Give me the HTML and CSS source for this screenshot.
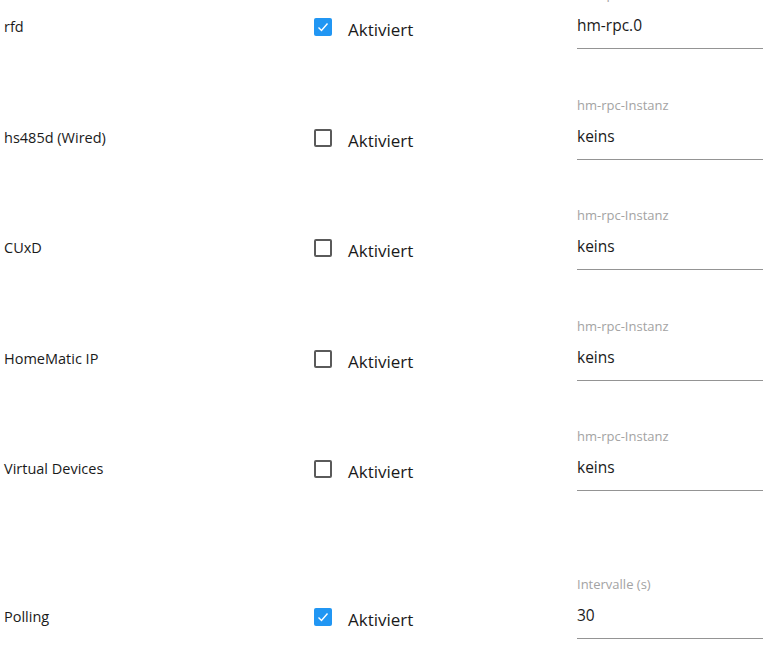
FILE: index.html
```html
<!DOCTYPE html>
<html lang="de">
<head>
<meta charset="utf-8">
<title>Einstellungen</title>
<link rel="stylesheet" href="styles.css">
</head>
<body>
<div class="page">
  <div class="row">
    <div class="name">rfd</div>
    <div class="check-cell">
      <span class="box checked"><svg viewBox="0 0 18 18" width="18" height="18"><rect x="0" y="0" width="18" height="18" rx="2" fill="#2196f3"/><polyline points="4.5,9.5 7.5,12.5 13.5,5.5" fill="none" stroke="#fff" stroke-width="1.4"/></svg></span>
      <span class="check-label">Aktiviert</span>
    </div>
    <div class="field">
      <div class="field-label">hm-rpc-Instanz</div>
      <div class="field-value">hm-rpc.0</div>
    </div>
  </div>
  <div class="row">
    <div class="name">hs485d (Wired)</div>
    <div class="check-cell">
      <span class="box"></span>
      <span class="check-label">Aktiviert</span>
    </div>
    <div class="field">
      <div class="field-label">hm-rpc-Instanz</div>
      <div class="field-value">keins</div>
    </div>
  </div>
  <div class="row">
    <div class="name">CUxD</div>
    <div class="check-cell">
      <span class="box"></span>
      <span class="check-label">Aktiviert</span>
    </div>
    <div class="field">
      <div class="field-label">hm-rpc-Instanz</div>
      <div class="field-value">keins</div>
    </div>
  </div>
  <div class="row">
    <div class="name">HomeMatic IP</div>
    <div class="check-cell">
      <span class="box"></span>
      <span class="check-label">Aktiviert</span>
    </div>
    <div class="field">
      <div class="field-label">hm-rpc-Instanz</div>
      <div class="field-value">keins</div>
    </div>
  </div>
  <div class="row">
    <div class="name">Virtual Devices</div>
    <div class="check-cell">
      <span class="box"></span>
      <span class="check-label">Aktiviert</span>
    </div>
    <div class="field">
      <div class="field-label">hm-rpc-Instanz</div>
      <div class="field-value">keins</div>
    </div>
  </div>
  <div class="row polling">
    <div class="name">Polling</div>
    <div class="check-cell">
      <span class="box checked"><svg viewBox="0 0 18 18" width="18" height="18"><rect x="0" y="0" width="18" height="18" rx="2" fill="#2196f3"/><polyline points="4.5,9.5 7.5,12.5 13.5,5.5" fill="none" stroke="#fff" stroke-width="1.4"/></svg></span>
      <span class="check-label">Aktiviert</span>
    </div>
    <div class="field">
      <div class="field-label">Intervalle (s)</div>
      <div class="field-value">30</div>
    </div>
  </div>
</div>
</body>
</html>
```

FILE: styles.css
```css
html, body {
  margin: 0;
  padding: 0;
  background: #ffffff;
  overflow: hidden;
}
body {
  font-family: "Open Sans", "Noto Sans", sans-serif;
  color: #1a1a1a;
  width: 763px;
  height: 651px;
}
.page {
  margin-top: -21px;
}
.row {
  display: grid;
  grid-template-columns: 314px 263px 1fr;
  height: 110.5px;
}
.row.polling {
  margin-top: 37.5px;
}
.name {
  padding-left: 4px;
  padding-top: 38px;
  font-size: 14.5px;
  line-height: 20px;
}
.check-cell {
  display: flex;
  align-items: center;
  height: 24px;
  margin-top: 36px;
}
.box {
  box-sizing: border-box;
  width: 18px;
  height: 18px;
  border: 2px solid #5a5a5a;
  border-radius: 2px;
  flex: none;
}
.box.checked {
  border: none;
}
.box svg {
  display: block;
}
.check-label {
  margin-left: 16px;
  font-size: 17px;
  line-height: 24px;
  margin-top: 6px;
}
.field {
  padding-top: 7px;
}
.field-label {
  font-size: 13px;
  line-height: 17px;
  color: #a3a3a3;
}
.field-value {
  margin-top: 10px;
  font-size: 15.5px;
  line-height: 24px;
  padding-bottom: 11px;
  border-bottom: 1px solid #949494;
}
```
